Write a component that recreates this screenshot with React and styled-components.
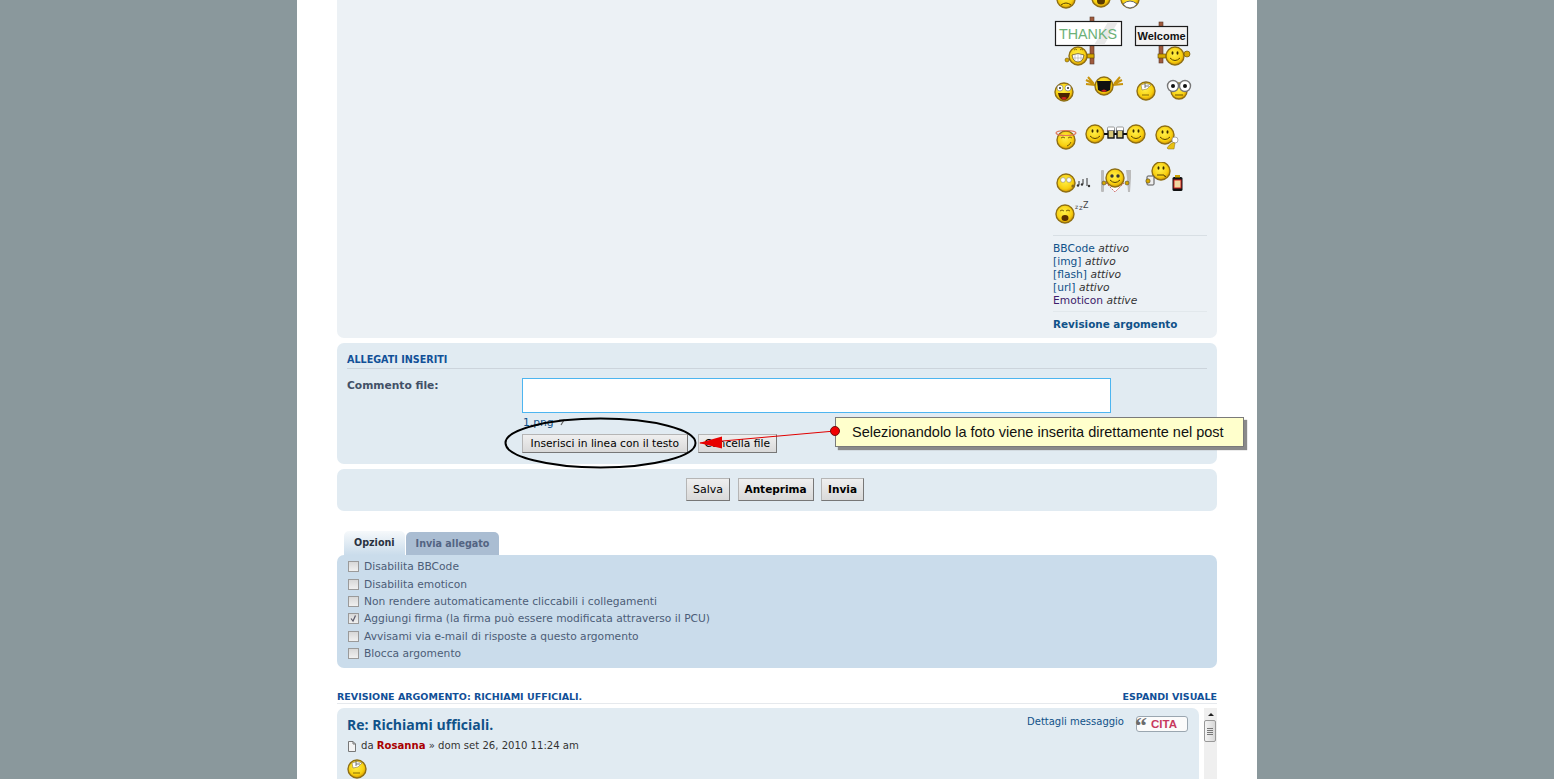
import React from 'react'
import styled, { createGlobalStyle } from 'styled-components'

const Global = createGlobalStyle`
  html, body { margin: 0; height: 100%; overflow: hidden; }
  body {
    background: #8a989c;
    font-family: "DejaVu Sans", Verdana, sans-serif;
    font-size: 10.7px;
    color: #536482;
  }
`

// little yellow face used by every emoticon
const Face = ({ cx, cy, r = 9, children }) => (
  <g>
    <circle cx={cx} cy={cy} r={r} fill="url(#smile)" stroke="#8f6f14" strokeWidth="1.4" />
    {children}
  </g>
)

const Eyes = ({ cx, cy, dx = 3 }) => (
  <g fill="#3a2c00">
    <ellipse cx={cx - dx} cy={cy} rx="1" ry="1.7" />
    <ellipse cx={cx + dx} cy={cy} rx="1" ry="1.7" />
  </g>
)

const Grin = ({ cx, cy }) => (
  <path d={`M${cx - 5} ${cy} Q${cx} ${cy + 5} ${cx + 5} ${cy}`} fill="none" stroke="#5a4300" strokeWidth="1" />
)

const RollEyes = ({ cx, cy }) => (
  <Face cx={cx} cy={cy}>
    <path d={`M${cx - 5} ${cy - 6} Q${cx} ${cy - 9} ${cx + 5} ${cy - 6} L${cx + 1} ${cy - 2} L${cx - 4} ${cy - 1}Z`} fill="#fff" stroke="#8a7a50" strokeWidth=".6" />
    <path d={`M${cx - 1} ${cy - 8} V${cy - 3} M${cx - 1} ${cy - 5} H${cx + 3}`} stroke="#555" strokeWidth=".8" />
    <path d={`M${cx - 4} ${cy + 4} H${cx + 3}`} stroke="#6a5000" strokeWidth=".8" />
  </Face>
)

const emoteRows = [
  {
    height: 9,
    top: 0,
    clip: true,
    items: [
      { x: 1055, w: 22, y: -11, h: 20, draw: <Face cx={1066} cy={-1}><path d="M1061 5 Q1066 1 1071 5" fill="none" stroke="#5a4300" /></Face> },
      { x: 1090, w: 22, y: -11, h: 20, draw: <Face cx={1101} cy={-2}><ellipse cx="1101" cy="1" rx="4" ry="3.5" fill="#5a3a00" /></Face> },
      { x: 1119, w: 22, y: -11, h: 20, draw: <Face cx={1130} cy={-1}><path d="M1123 4 Q1130 -2 1137 4 Q1134 8 1130 8 Q1126 8 1123 4Z" fill="#fff" stroke="#666" /></Face> },
    ],
  },
  {
    height: 52,
    top: 7,
    items: [
      {
        x: 1054, w: 70, y: 16, h: 52,
        draw: (
          <g>
            <rect x="1090" y="17" width="4" height="47" fill="#a05a3c" stroke="#5a3a2a" strokeWidth=".6" />
            <rect x="1055.5" y="21.5" width="66" height="24" fill="#fff" stroke="#1c1c1c" strokeWidth="1.2" />
            <path d="M1108 22 L1118 22 L1104 45 L1094 45Z" fill="#e8e8e8" />
            <text x="1059" y="39" fontFamily="Liberation Sans" fontSize="14" fill="#6cb178" textLength="58" lengthAdjust="spacingAndGlyphs">THANKS</text>
            <rect x="1087" y="54" width="7" height="4" fill="#d8a800" stroke="#5a4300" strokeWidth=".6" />
            <Face cx={1078} cy={56}>
              <path d="M1072 55 Q1078 52 1084 55 Q1083 62 1078 62 Q1073 62 1072 55Z" fill="#fff" stroke="#5a4300" strokeWidth=".7" />
              <path d="M1075 54 V62 M1078 53 V62 M1081 54 V62 M1072 58 H1084" stroke="#999" strokeWidth=".5" />
              <path d="M1074 50 Q1076 48 1077 50 M1080 50 Q1081 48 1083 50" fill="none" stroke="#5a4300" strokeWidth=".7" />
            </Face>
            <circle cx="1067" cy="60" r="2" fill="#d8a800" stroke="#5a4300" strokeWidth=".5" />
          </g>
        ),
      },
      {
        x: 1134, w: 58, y: 16, h: 52,
        draw: (
          <g>
            <rect x="1159" y="22" width="4" height="41" fill="#a05a3c" stroke="#5a3a2a" strokeWidth=".6" />
            <rect x="1135.5" y="26.5" width="52" height="19" fill="#f2f2f2" stroke="#1c1c1c" strokeWidth="1.2" />
            <text x="1161.5" y="40" textAnchor="middle" fontFamily="Liberation Sans" fontWeight="700" fontSize="11" fill="#111">Welcome</text>
            <rect x="1158" y="54" width="8" height="4" fill="#d8a800" stroke="#5a4300" strokeWidth=".6" />
            <Face cx={1175} cy={56}>
              <Eyes cx={1175} cy={53} dx={2.5} />
              <Grin cx={1175} cy={58} />
            </Face>
            <circle cx="1187" cy="54" r="3" fill="#d8a800" stroke="#5a4300" strokeWidth=".6" />
          </g>
        ),
      },
    ],
  },
  {
    height: 30,
    top: 7,
    items: [
      {
        x: 1054, w: 20, y: 75, h: 30,
        draw: (
          <Face cx={1064} cy={92}>
            <circle cx="1060" cy="88" r="3" fill="#fff" stroke="#777" strokeWidth=".6" />
            <circle cx="1068" cy="88" r="3" fill="#fff" stroke="#777" strokeWidth=".6" />
            <circle cx="1060" cy="88" r="1" fill="#222" />
            <circle cx="1068" cy="88" r="1" fill="#222" />
            <path d="M1058 93 H1070 Q1069 100 1064 100 Q1059 100 1058 93Z" fill="#4a2400" />
            <path d="M1061 98 Q1064 96 1067 98 L1064 100Z" fill="#d02020" />
          </Face>
        ),
      },
      {
        x: 1084, w: 42, y: 75, h: 30,
        draw: (
          <g>
            <path d="M1086 80 L1094 84 M1088 77 L1094 84 M1086 84 L1095 85 M1122 80 L1114 84 M1120 77 L1114 84 M1123 84 L1113 85" stroke="#c8940c" strokeWidth="2" />
            <Face cx={1104} cy={86}>
              <path d="M1097 81 H1111 L1110 90 Q1104 94 1098 90Z" fill="#111" />
              <path d="M1101 91 Q1104 88 1107 91 L1104 92Z" fill="#d02020" />
            </Face>
          </g>
        ),
      },
      { x: 1136, w: 20, y: 75, h: 30, draw: <RollEyes cx={1146} cy={91} /> },
      {
        x: 1165, w: 28, y: 75, h: 30,
        draw: (
          <g>
            <Face cx={1179} cy={91} r={8} />
            <path d="M1175 95 H1183" stroke="#6a5000" />
            <circle cx="1173" cy="86" r="5.5" fill="#fff" stroke="#777" strokeWidth="1.4" />
            <circle cx="1185" cy="86" r="5.5" fill="#fff" stroke="#777" strokeWidth="1.4" />
            <circle cx="1173" cy="86" r="2" fill="#111" />
            <circle cx="1185" cy="86" r="2" fill="#111" />
          </g>
        ),
      },
    ],
  },
  {
    height: 32,
    top: 15,
    items: [
      {
        x: 1055, w: 22, y: 120, h: 32,
        draw: (
          <Face cx={1066} cy={140}>
            <path d="M1061 138 Q1063 136 1065 138 M1068 138 Q1070 136 1072 138" fill="none" stroke="#5a4300" strokeWidth=".8" />
            <path d="M1067 146 Q1070 145 1071 142" fill="none" stroke="#5a4300" strokeWidth=".8" />
            <ellipse cx="1066" cy="133" rx="10" ry="2.5" fill="none" stroke="#e0785a" strokeWidth="1.2" />
          </Face>
        ),
      },
      {
        x: 1084, w: 64, y: 120, h: 32,
        draw: (
          <g>
            <Face cx={1095} cy={134}><Eyes cx={1095} cy={131} dx={2.5} /><Grin cx={1095} cy={136} /></Face>
            <Face cx={1136} cy={134}><Eyes cx={1136} cy={131} dx={2.5} /><Grin cx={1136} cy={136} /></Face>
            <path d="M1104 134 H1127" stroke="#111" strokeWidth="2" />
            <rect x="1108" y="130" width="6" height="8" fill="#d8c878" stroke="#111" strokeWidth="1.4" />
            <rect x="1117" y="130" width="6" height="8" fill="#d8c878" stroke="#111" strokeWidth="1.4" />
            <rect x="1107.5" y="127" width="7" height="3.5" rx="1" fill="#fff" stroke="#777" strokeWidth=".7" />
            <rect x="1116.5" y="127" width="7" height="3.5" rx="1" fill="#fff" stroke="#777" strokeWidth=".7" />
          </g>
        ),
      },
      {
        x: 1155, w: 26, y: 120, h: 32,
        draw: (
          <g>
            <Face cx={1165} cy={135}><Eyes cx={1165} cy={132} dx={2.5} /><Grin cx={1165} cy={137} /></Face>
            <circle cx="1175" cy="140" r="3" fill="#fff" stroke="#999" strokeWidth=".8" />
            <path d="M1167 148 Q1172 141 1175 143 L1174 149 H1168Z" fill="#e8c010" stroke="#8a6d1a" strokeWidth=".5" />
          </g>
        ),
      },
    ],
  },
  {
    height: 34,
    top: 10,
    items: [
      {
        x: 1055, w: 36, y: 162, h: 34,
        draw: (
          <g>
            <Face cx={1066} cy={183}>
              <circle cx="1063" cy="180" r="2.4" fill="#fff" stroke="#777" strokeWidth=".5" />
              <circle cx="1069" cy="180" r="2.4" fill="#fff" stroke="#777" strokeWidth=".5" />
              <circle cx="1073" cy="186" r="1.6" fill="#8a6d1a" />
            </Face>
            <path d="M1079 185 V181 M1083 184 V179 M1087 186 V178" stroke="#333" strokeWidth="1" />
            <circle cx="1078" cy="185.5" r="1.2" fill="#333" />
            <circle cx="1082" cy="184.5" r="1.2" fill="#333" />
            <circle cx="1089" cy="186" r="1.2" fill="#333" />
          </g>
        ),
      },
      {
        x: 1100, w: 34, y: 162, h: 34,
        draw: (
          <g>
            <rect x="1101" y="170" width="3" height="22" rx="1" fill="#bbb" />
            <path d="M1126 170 H1131 V178 L1130 192 H1128 L1127 178Z" fill="#bbb" />
            <path d="M1106 183 L1124 183 L1115 192Z" fill="#fff" stroke="#d07070" strokeWidth="1" strokeDasharray="2 1" />
            <Face cx={1115} cy={178}>
              <circle cx="1112" cy="176" r="1.7" fill="#333" />
              <circle cx="1118" cy="176" r="1.7" fill="#333" />
              <Grin cx={1115} cy={180} />
            </Face>
            <circle cx="1104" cy="183" r="2" fill="#d8a800" stroke="#333" strokeWidth=".5" />
            <circle cx="1127" cy="183" r="2" fill="#d8a800" stroke="#333" strokeWidth=".5" />
          </g>
        ),
      },
      {
        x: 1144, w: 40, y: 162, h: 34,
        draw: (
          <g>
            <Face cx={1161} cy={171}>
              <Eyes cx={1161} cy={168} dx={2.5} />
              <path d="M1157 175 H1164 Q1165 178 1166 176" fill="none" stroke="#5a4300" />
            </Face>
            <rect x="1147" y="176" width="7" height="9" rx="1" fill="#eee" stroke="#555" />
            <circle cx="1148" cy="181" r="2.2" fill="#d8a800" stroke="#333" strokeWidth=".5" />
            <rect x="1172.5" y="177" width="10" height="14" rx="1.5" fill="#111" />
            <rect x="1174" y="180" width="7" height="8" fill="#f0d8a0" stroke="#d02020" />
            <rect x="1175" y="175" width="5" height="2.5" fill="#c8a000" />
          </g>
        ),
      },
    ],
  },
  {
    height: 28,
    top: 4,
    items: [
      {
        x: 1055, w: 36, y: 200, h: 28,
        draw: (
          <g>
            <Face cx={1065} cy={214}>
              <path d="M1060 211 Q1062 209 1064 211 M1066 211 Q1068 209 1070 211" fill="none" stroke="#5a4300" strokeWidth=".8" />
              <ellipse cx="1065" cy="218" rx="3.5" ry="3" fill="#5a3000" />
            </Face>
            <text x="1075" y="209" fontFamily="DejaVu Sans" fontSize="6" fill="#444">z</text>
            <text x="1079" y="210" fontFamily="DejaVu Sans" fontSize="7" fill="#444">z</text>
            <text x="1083" y="208" fontFamily="DejaVu Sans" fontSize="8" fill="#444">Z</text>
          </g>
        ),
      },
    ],
  },
]

const tools = [
  { name: 'BBCode', state: 'attivo', color: '#105289' },
  { name: '[img]', state: 'attivo', color: '#105289' },
  { name: '[flash]', state: 'attivo', color: '#105289' },
  { name: '[url]', state: 'attivo', color: '#105289' },
  { name: 'Emoticon', state: 'attive', color: '#3d1c6b' },
]

const options = [
  { label: 'Disabilita BBCode' },
  { label: 'Disabilita emoticon' },
  { label: 'Non rendere automaticamente cliccabili i collegamenti' },
  { label: 'Aggiungi firma (la firma può essere modificata attraverso il PCU)', checked: true },
  { label: 'Avvisami via e-mail di risposte a questo argomento' },
  { label: 'Blocca argomento' },
]

const App = () => {
  return (
    <Page>
      <Global />
      <svg width="0" height="0" style={{ position: 'absolute' }}>
        <defs>
          <radialGradient id="smile" cx="45%" cy="40%" r="60%">
            <stop offset="0%" stopColor="#fff04a" />
            <stop offset="70%" stopColor="#f8d010" />
            <stop offset="100%" stopColor="#d89a00" />
          </radialGradient>
        </defs>
      </svg>

      <Wrap>
        <EditorPanel>
          <SideColumn>
            <Emotes>
              {emoteRows.map((row, i) => (
                <EmoteRow key={i} $height={row.height} $top={row.top} $clip={row.clip}>
                  {row.items.map((item, j) => {
                    const prev = row.items[j - 1]
                    const left = prev ? item.x - prev.x - prev.w : item.x - 1053
                    return (
                      <EmoteSvg
                        key={j}
                        width={item.w}
                        height={item.h}
                        viewBox={`${item.x} ${item.y} ${item.w} ${item.h}`}
                        $left={left}
                      >
                        {item.draw}
                      </EmoteSvg>
                    )
                  })}
                </EmoteRow>
              ))}
            </Emotes>
            <ToolList>
              {tools.map(t => (
                <ToolLine key={t.name}>
                  <ToolName $color={t.color}>{t.name}</ToolName> <em>{t.state}</em>
                </ToolLine>
              ))}
            </ToolList>
            <ReviewLink>Revisione argomento</ReviewLink>
          </SideColumn>
        </EditorPanel>

        <AttachPanel>
          <SectionTitle>ALLEGATI INSERITI</SectionTitle>
          <AttachRow>
            <FieldLabel>Commento file:</FieldLabel>
            <AttachBody>
              <CommentBox />
              <FileLink>
                1.png
                <svg width="7" height="7" viewBox="0 0 7 7">
                  <path d="M1 1 H6 L3 6" fill="none" stroke="#666" strokeWidth="1.2" />
                </svg>
              </FileLink>
              <ButtonRow>
                <Button $pad={7.5}>Inserisci in linea con il testo</Button>
                <Button $pad={6}>Cancella file</Button>
              </ButtonRow>
            </AttachBody>
          </AttachRow>
        </AttachPanel>

        <SubmitPanel>
          <SubmitButton>Salva</SubmitButton>
          <SubmitButton $main>Anteprima</SubmitButton>
          <SubmitButton $main>Invia</SubmitButton>
        </SubmitPanel>

        <Tabs>
          <Tab $active>Opzioni</Tab>
          <Tab>Invia allegato</Tab>
        </Tabs>
        <OptionsPanel>
          {options.map(o => (
            <OptionRow key={o.label}>
              <Check $checked={o.checked}>
                {o.checked && (
                  <svg width="9" height="9" viewBox="0 0 9 9">
                    <path d="M2 4.5 L4 7 L6.5 1.5" fill="none" stroke="#5a5a6a" strokeWidth="1.2" />
                  </svg>
                )}
              </Check>
              {o.label}
            </OptionRow>
          ))}
        </OptionsPanel>

        <ReviewHead>
          <HeadTitle>REVISIONE ARGOMENTO: RICHIAMI UFFICIALI.</HeadTitle>
          <HeadTitle>ESPANDI VISUALE</HeadTitle>
        </ReviewHead>

        <ReviewRow>
          <PostPanel>
            <PostTop>
              <div>
                <PostTitle>Re: Richiami ufficiali.</PostTitle>
                <PostMeta>
                  <svg width="9" height="11" viewBox="0 0 9 11">
                    <path d="M1.5 .5 H6 L8.5 3 V10.5 H1.5Z" fill="#f4f4f4" stroke="#777" />
                    <path d="M6 .5 V3 H8.5" fill="none" stroke="#777" />
                  </svg>
                  <span>da <Author>Rosanna</Author> » dom set 26, 2010 11:24 am</span>
                </PostMeta>
              </div>
              <PostActions>
                <DetailLink>Dettagli messaggio</DetailLink>
                <QuoteButton>
                  <QuoteMark>“</QuoteMark>
                  CITA
                </QuoteButton>
              </PostActions>
            </PostTop>
            <PostBody>
              <EmoteSvg width="20" height="20" viewBox="1055 81 20 20" $left={0}>
                <RollEyes cx={1065} cy={91} />
              </EmoteSvg>
            </PostBody>
          </PostPanel>
          <Scrollbar>
            <ScrollArrow />
            <ScrollThumb>
              <ScrollGrip />
            </ScrollThumb>
          </Scrollbar>
        </ReviewRow>

        <Callout>Selezionandolo la foto viene inserita direttamente nel post</Callout>
        <Notes width="960" height="779" viewBox="297 0 960 779">
          <ellipse cx="600.5" cy="443" rx="95" ry="24.5" fill="none" stroke="#000" strokeWidth="2" />
          <path d="M835 431 L700 443" stroke="#e00000" strokeWidth="1" />
          <path d="M699 443 L722 436.5 L722 448.5Z" fill="#e80000" />
          <circle cx="835" cy="431" r="4.5" fill="#f00000" stroke="#701010" />
        </Notes>
      </Wrap>
    </Page>
  )
}

export default App

const Page = styled.div`
  width: 960px;
  height: 779px;
  margin: 0 auto;
  overflow: hidden;
`

const Wrap = styled.div`
  position: relative;
  width: 880px;
  height: 779px;
  padding: 0 40px;
  background: #fff;
`

const Panel = styled.div`
  box-sizing: border-box;
  border-radius: 7px;
  background: #e1ebf2;
`

const EditorPanel = styled(Panel)`
  display: flex;
  justify-content: flex-end;
  height: 338px;
  padding-right: 10px;
  border-radius: 0 0 7px 7px;
  background: #ecf1f5;
`

const SideColumn = styled.div`
  width: 154px;
`

const Emotes = styled.div`
  height: 235px;
  border-bottom: 1px solid #d8dfe4;
  overflow: hidden;
`

const EmoteRow = styled.div`
  display: flex;
  align-items: ${p => (p.$clip ? 'flex-end' : 'flex-start')};
  height: ${p => p.$height}px;
  margin-top: ${p => p.$top}px;
  overflow: hidden;
`

const EmoteSvg = styled.svg`
  flex: none;
  display: block;
  margin-left: ${p => p.$left}px;
`

const ToolList = styled.div`
  box-sizing: border-box;
  height: 76px;
  padding-top: 6px;
  border-bottom: 1px solid #e2e8ec;
  line-height: 13px;
`

const ToolLine = styled.div`
  color: #333;
  em { font-style: italic; }
`

const ToolName = styled.span`
  color: ${p => p.$color};
`

const ReviewLink = styled.div`
  margin-top: 6px;
  font-size: 10.4px;
  font-weight: 700;
  line-height: 13px;
  color: #105289;
`

const AttachPanel = styled(Panel)`
  height: 121px;
  margin-top: 5px;
  padding: 10px 10px 0;
`

const SectionTitle = styled.div`
  height: 15px;
  border-bottom: 1px solid #ccd4dc;
  font-size: 9.6px;
  font-weight: 700;
  line-height: 13px;
  color: #115098;
`

const AttachRow = styled.div`
  display: flex;
  margin-top: 9px;
`

const FieldLabel = styled.div`
  width: 175px;
  padding-top: 1px;
  font-size: 10.7px;
  font-weight: 700;
  line-height: 14px;
  color: #425067;
`

const AttachBody = styled.div`
  flex: 1;
`

const CommentBox = styled.div`
  box-sizing: border-box;
  width: 589px;
  height: 35px;
  border: 1px solid #4db5f0;
  background: #fff;
`

const FileLink = styled.div`
  display: flex;
  align-items: center;
  gap: 4px;
  box-sizing: border-box;
  height: 21px;
  padding: 1px 0 3px 1px;
  line-height: 13px;
  color: #105289;
`

const ButtonRow = styled.div`
  display: flex;
  gap: 10px;
`

const Button = styled.div`
  box-sizing: border-box;
  height: 19px;
  padding: 0 ${p => p.$pad}px;
  border: 1px solid #8e8e8e;
  border-color: #b5b5b5 #777 #777 #b5b5b5;
  background: linear-gradient(#efefef, #d9d9d9);
  font-size: 10.7px;
  line-height: 17px;
  color: #000;
`

const SubmitPanel = styled(Panel)`
  display: flex;
  justify-content: center;
  gap: 7.5px;
  height: 42px;
  margin-top: 5px;
  padding: 9px 4px 0 0;
`

const SubmitButton = styled.div`
  box-sizing: border-box;
  height: 23px;
  padding: 0 6px;
  border: 1px solid #8e8e8e;
  border-color: #b5b5b5 #777 #777 #b5b5b5;
  background: linear-gradient(#efefef, #d9d9d9);
  font-size: ${p => (p.$main ? 10.5 : 11)}px;
  font-weight: ${p => (p.$main ? 700 : 400)};
  line-height: 21px;
  color: #000;
`

const Tabs = styled.div`
  display: flex;
  align-items: flex-end;
  gap: 1px;
  height: 24px;
  margin-top: 20px;
  padding-left: 7px;
`

const Tab = styled.div`
  box-sizing: border-box;
  height: ${p => (p.$active ? 24 : 23)}px;
  padding: 0 10px;
  border-radius: 5px 5px 0 0;
  background: ${p => (p.$active ? 'linear-gradient(#f6f9fb, #cadceb)' : '#aabdd2')};
  font-size: 9.6px;
  font-weight: 700;
  line-height: 23px;
  color: ${p => (p.$active ? '#28313f' : '#536482')};
`

const OptionsPanel = styled(Panel)`
  height: 113px;
  padding: 3px 0 0 11px;
  background: #cadceb;
`

const OptionRow = styled.div`
  display: flex;
  align-items: center;
  gap: 5px;
  height: 17.4px;
  color: #4c5d77;
`

const Check = styled.span`
  display: flex;
  align-items: center;
  justify-content: center;
  box-sizing: border-box;
  width: 11px;
  height: 11px;
  border: 1px solid #9a9a9a;
  background: linear-gradient(#d8d8d8, #f0f0f0);
`

const ReviewHead = styled.div`
  display: flex;
  justify-content: space-between;
  height: 14px;
  margin-top: 21px;
  border-bottom: 1px solid #e6e9ed;
`

const HeadTitle = styled.div`
  padding-top: 1px;
  font-size: 9.5px;
  font-weight: 700;
  line-height: 13px;
  color: #115098;
`

const ReviewRow = styled.div`
  display: flex;
  justify-content: space-between;
  margin-top: 4px;
`

const PostPanel = styled(Panel)`
  width: 862px;
  height: 80px;
  padding: 0 10px;
  border-radius: 7px 7px 0 0;
`

const PostTop = styled.div`
  display: flex;
  justify-content: space-between;
  padding-top: 7px;
`

const PostTitle = styled.div`
  font-family: "Open Sans", sans-serif;
  font-size: 14px;
  font-weight: 700;
  line-height: 19px;
  color: #105289;
`

const PostMeta = styled.div`
  display: flex;
  align-items: center;
  gap: 5px;
  margin-top: 5px;
  font-size: 10.1px;
  line-height: 14px;
  color: #333;
`

const Author = styled.span`
  font-weight: 700;
  color: #aa0000;
`

const PostActions = styled.div`
  display: flex;
  gap: 12px;
  padding-right: 1px;
  height: 20px;
`

const DetailLink = styled.div`
  font-size: 10px;
  line-height: 13px;
  color: #105289;
`

const QuoteButton = styled.div`
  position: relative;
  box-sizing: border-box;
  width: 52px;
  height: 16px;
  margin-top: 1px;
  padding-left: 14px;
  border: 1px solid #9aa6b0;
  border-radius: 3px;
  background: #fbfbfb;
  font-family: "Liberation Sans", Arial, sans-serif;
  font-size: 11.5px;
  font-weight: 700;
  line-height: 15px;
  color: #c7385e;
`

const QuoteMark = styled.span`
  position: absolute;
  left: -2px;
  top: -4px;
  font-family: "Liberation Serif", serif;
  font-size: 24px;
  font-weight: 700;
  line-height: 24px;
  color: #6b6b6b;
`

const PostBody = styled.div`
  margin-top: 6px;
`

const Scrollbar = styled.div`
  width: 13px;
  height: 71px;
  background: #efefef;
`

const ScrollArrow = styled.div`
  width: 0;
  height: 0;
  margin: 5px auto 4px;
  border-left: 3px solid transparent;
  border-right: 3px solid transparent;
  border-bottom: 3px solid #222;
`

const ScrollThumb = styled.div`
  display: flex;
  align-items: center;
  justify-content: center;
  box-sizing: border-box;
  width: 12px;
  height: 22px;
  margin-top: 4px;
  border: 1px solid #999;
  border-radius: 2px;
  background: linear-gradient(90deg, #f4f4f4, #d8d8d8);
`

const ScrollGrip = styled.div`
  width: 6px;
  height: 7px;
  background: repeating-linear-gradient(#777 0 1px, transparent 1px 2px);
`

const Notes = styled.svg`
  position: absolute;
  left: 0;
  top: 0;
  pointer-events: none;
`

const Callout = styled.div`
  position: absolute;
  left: 538px;
  top: 417px;
  box-sizing: border-box;
  width: 409px;
  height: 30px;
  padding-left: 16px;
  border: 1px solid #7a7a7a;
  background: #ffffcc;
  box-shadow: 3px 3px 1px #8a8a8a;
  font-family: "Liberation Sans", Arial, sans-serif;
  font-size: 14.5px;
  line-height: 28px;
  color: #111;
`
